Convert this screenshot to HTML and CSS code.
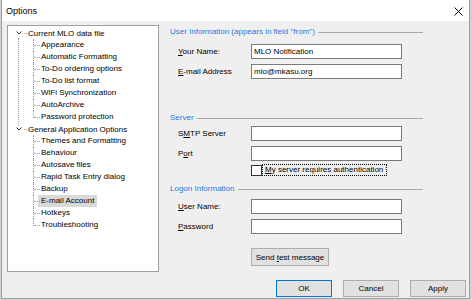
FILE: index.html
```html
<!DOCTYPE html>
<html>
<head>
<meta charset="utf-8">
<link rel="stylesheet" href="styles.css">
</head>
<body>
<div class="win">
  <div class="titlebar">
    <span class="title">Options</span>
    <svg class="close" width="9" height="9" viewBox="0 0 9 9"><path d="M0.5 0.5L8.5 8.5M8.5 0.5L0.5 8.5" stroke="#000" stroke-width="1" fill="none"/></svg>
  </div>
  <div class="content">
    <div class="main">
      <div class="tree">
        <ul class="roots">
          <li class="root first">
            <div class="rrow"><svg class="chev" width="6" height="4" viewBox="0 0 6 4"><path d="M0.5 0.5L3 3L5.5 0.5" stroke="#333" fill="none"/></svg><span class="dash"></span><span class="rlbl">Current MLO data file</span></div>
            <ul class="kids">
              <li><span class="lbl">Appearance</span></li>
              <li><span class="lbl">Automatic Formatting</span></li>
              <li><span class="lbl">To-Do ordering options</span></li>
              <li><span class="lbl">To-Do list format</span></li>
              <li><span class="lbl">WiFi Synchronization</span></li>
              <li><span class="lbl">AutoArchive</span></li>
              <li><span class="lbl">Password protection</span></li>
            </ul>
          </li>
          <li class="root">
            <div class="rrow"><svg class="chev" width="6" height="4" viewBox="0 0 6 4"><path d="M0.5 0.5L3 3L5.5 0.5" stroke="#333" fill="none"/></svg><span class="dash"></span><span class="rlbl">General Application Options</span></div>
            <ul class="kids">
              <li><span class="lbl">Themes and Formatting</span></li>
              <li><span class="lbl">Behaviour</span></li>
              <li><span class="lbl">Autosave files</span></li>
              <li><span class="lbl">Rapid Task Entry dialog</span></li>
              <li><span class="lbl">Backup</span></li>
              <li><span class="lbl sel">E-mail Account</span></li>
              <li><span class="lbl">Hotkeys</span></li>
              <li><span class="lbl">Troubleshooting</span></li>
            </ul>
          </li>
        </ul>
      </div>
      <div class="panel">
        <div class="group-h"><span>User Information (appears in field "from")</span></div>
        <div class="fields user">
          <label><u>Y</u>our Name:</label><div class="input">MLO Notification</div>
          <label><u>E</u>-mail Address</label><div class="input">mlo@mkasu.org</div>
        </div>
        <div class="group-h server"><span>Server</span></div>
        <div class="fields srv">
          <label>S<u>M</u>TP Server</label><div class="input"></div>
          <label>P<u>o</u>rt</label><div class="input"></div>
        </div>
        <div class="check">
          <span class="box"></span><span class="focus"><u>M</u>y server requires authentication</span>
        </div>
        <div class="group-h logon"><span>Logon Information</span></div>
        <div class="fields logon-f">
          <label><u>U</u>ser Name:</label><div class="input"></div>
          <label><u>P</u>assword</label><div class="input"></div>
        </div>
        <div class="send-row"><button class="btn send">Send <u>t</u>est message</button></div>
      </div>
    </div>
    <div class="buttons">
      <button class="btn dlg default">OK</button>
      <button class="btn dlg">Cancel</button>
      <button class="btn dlg">Apply</button>
    </div>
  </div>
</div>
</body>
</html>
```
FILE: styles.css
```css
* { box-sizing: border-box; }
html, body { margin: 0; padding: 0; }
body {
  background: #cfd4da;
  font: 8px "Liberation Sans", Arial, sans-serif;
  color: #000;
  width: 472px;
  height: 300px;
  overflow: hidden;
}
.win {
  margin-left: 1px;
  width: 469px;
  height: 299px;
  border: 1px solid #9c9c9c;
  border-top: 0;
  background: #efefef;
  display: flex;
  flex-direction: column;
}
.titlebar {
  height: 21px;
  flex: none;
  background: #fff;
  display: flex;
  align-items: center;
  justify-content: space-between;
  padding: 1px 6px 0 4px;
}
.title { font-size: 9px; }
.close { display: block; }
.content {
  flex: 1;
  padding: 4px 3px 0 5px;
  display: flex;
  flex-direction: column;
}
.main { display: flex; height: 247px; flex: none; }
.tree {
  width: 152px;
  height: 247px;
  border: 1px solid #a0a0a0;
  background: #fff;
  padding-top: 1px;
}
ul { list-style: none; margin: 0; padding: 0; }
.root { position: relative; }
.root.first::before {
  content: "";
  position: absolute;
  left: 10px;
  top: 11px;
  height: 88px;
  border-left: 1px dotted #a0a0a0;
}
.rrow {
  height: 12px;
  display: flex;
  align-items: center;
  padding-left: 8px;
  white-space: nowrap;
}
.chev { display: block; flex: none; }
.dash {
  width: 3px;
  margin: 0 1px 0 2px;
  border-top: 1px dotted #a0a0a0;
}
.kids li {
  position: relative;
  height: 12px;
  line-height: 12px;
  padding-left: 30px;
  white-space: nowrap;
}
.kids li::before {
  content: "";
  position: absolute;
  left: 25px;
  top: 0;
  height: 12px;
  border-left: 1px dotted #a0a0a0;
}
.kids li:last-child::before { height: 7px; }
.kids li::after {
  content: "";
  position: absolute;
  left: 26px;
  top: 6px;
  width: 6px;
  border-top: 1px dotted #a0a0a0;
}
.lbl { display: inline-block; padding: 0 3px; height: 12px; }
.lbl.sel { background: #d9d9d9; }
.panel { margin-left: 11px; width: 253px; }
.group-h {
  height: 12px;
  display: flex;
  align-items: center;
  color: #1f7ae0;
  white-space: nowrap;
}
.group-h::after {
  content: "";
  flex: 1;
  margin-left: 3px;
  border-top: 1px solid #a8a8a8;
  position: relative;
  top: 1px;
}
.fields {
  display: grid;
  grid-template-columns: 73px 151px;
  grid-auto-rows: 15px;
  row-gap: 5px;
  margin-left: 8px;
  align-items: center;
}
.fields.user { margin-top: 7px; }
.group-h.server { margin-top: 32px; }
.fields.srv { margin-top: 3px; }
.check {
  margin: 3px 0 0 81px;
  height: 12px;
  display: flex;
  align-items: center;
}
.box {
  width: 11px;
  height: 11px;
  border: 1px solid #333;
  background: #fff;
  flex: none;
}
.focus {
  height: 12px;
  line-height: 10px;
  padding: 0 3px 0 2px;
  border: 1px dotted #000;
  white-space: nowrap;
}
.group-h.logon { margin-top: 6px; }
.fields.logon-f { margin-top: 5px; }
.input {
  height: 15px;
  border: 1px solid #7a7a7a;
  background: #fff;
  padding-left: 2px;
  line-height: 13px;
  white-space: nowrap;
}
.send-row { margin: 14px 0 0 81px; }
.btn {
  font: inherit;
  color: #000;
  background: #e1e1e1;
  border: 1px solid #adadad;
  padding: 0;
  margin: 0;
  display: block;
}
.btn.send { width: 78px; height: 18px; }
.buttons {
  margin-top: 8px;
  display: flex;
  justify-content: flex-end;
  gap: 11px;
}
.btn.dlg { width: 56px; height: 17px; }
.btn.default { border-color: #0078d7; }
```
